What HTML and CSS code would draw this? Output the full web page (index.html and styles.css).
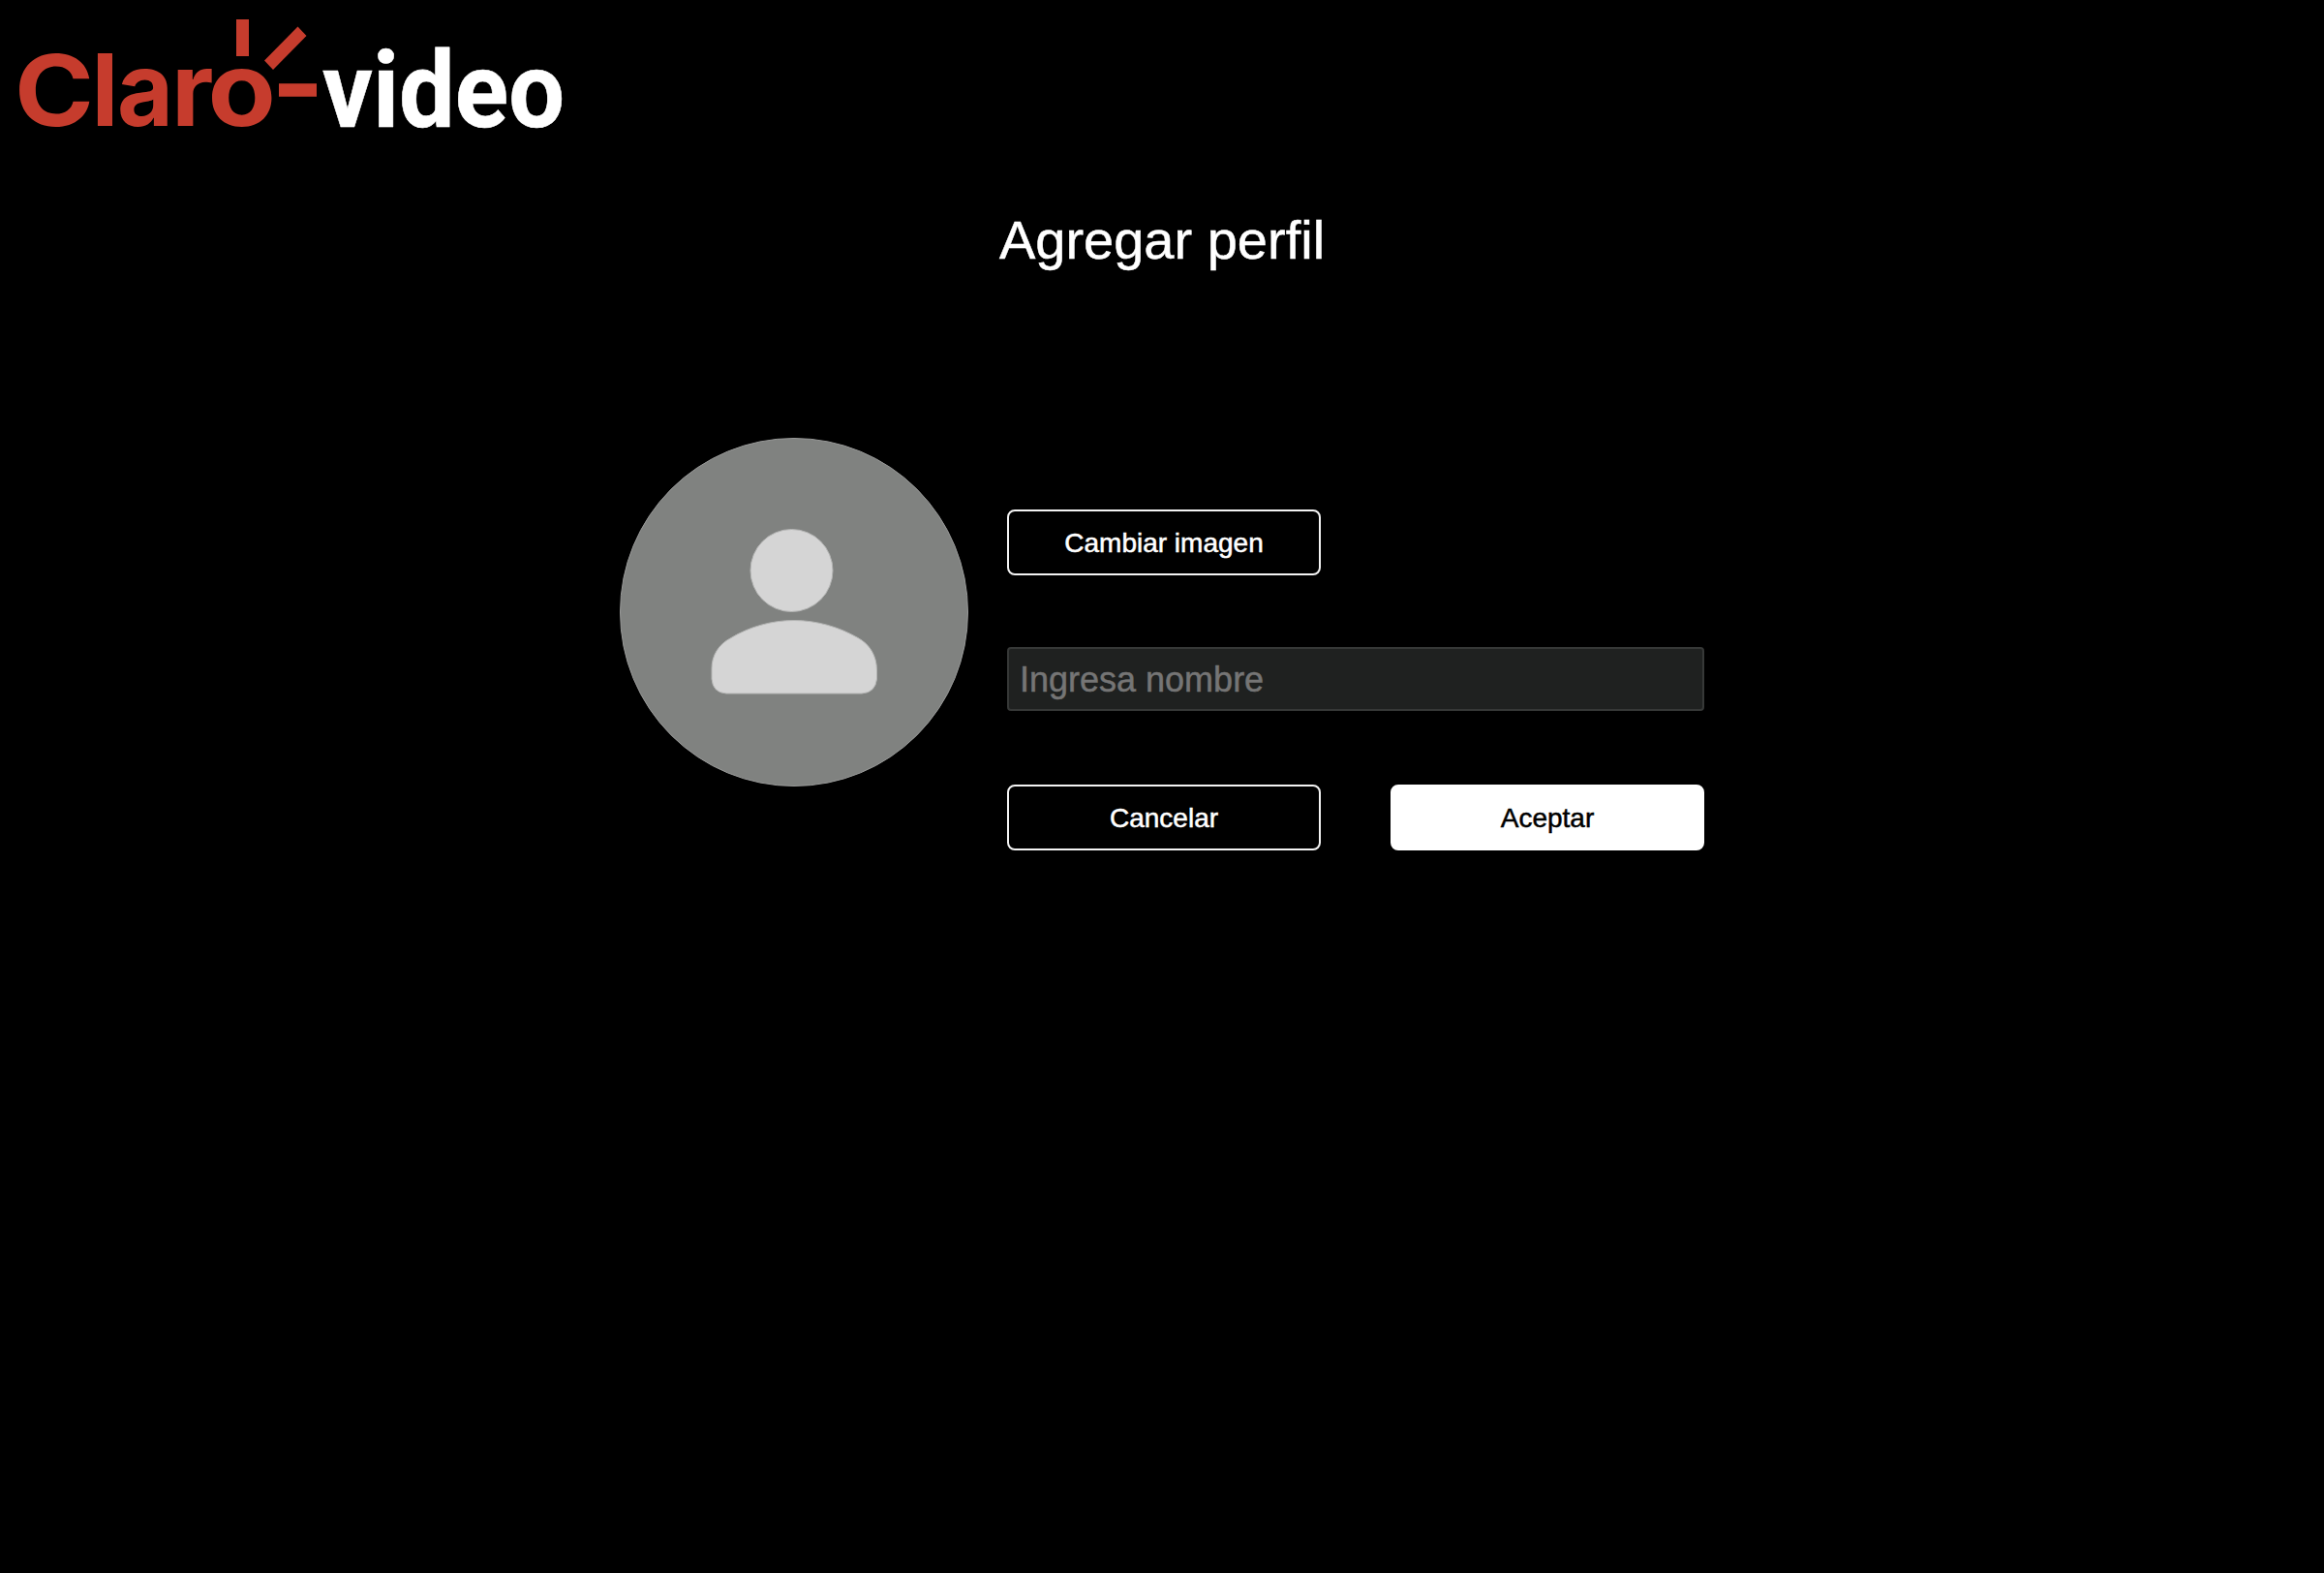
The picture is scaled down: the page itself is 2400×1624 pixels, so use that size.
FILE: index.html
```html
<!DOCTYPE html>
<html lang="es">
<head>
<meta charset="utf-8">
<title>Claro video</title>
<link rel="stylesheet" href="styles.css">
</head>
<body>
<header class="header">
<svg class="logo" width="600" height="170" viewBox="0 0 600 170" role="img" aria-label="Claro video">
<text class="logo-claro" y="130"><tspan class="logo-c" x="15" textLength="82" lengthAdjust="spacingAndGlyphs">C</tspan><tspan class="logo-l" x="94.500">l</tspan><tspan x="121" textLength="58" lengthAdjust="spacingAndGlyphs">a</tspan><tspan x="177">r</tspan><tspan x="214.500" textLength="70.500" lengthAdjust="spacingAndGlyphs">o</tspan></text>
<g class="logo-rays">
<path d="M244 20h13v38h-13z"/>
<path d="M307.500 27.500l9 9.500-34.500 35-9-9.500z"/>
<path d="M288 86.300h39v13.500h-39z"/>
</g>
<text class="logo-video" x="333" y="130.500" textLength="250" lengthAdjust="spacingAndGlyphs">video</text>
</svg>
</header>
<main class="profile">
<h1 class="title">Agregar perfil</h1>
<form class="editor">
<svg class="avatar" width="360" height="360" viewBox="0 0 360 360" aria-hidden="true">
<circle class="avatar-bg" cx="180" cy="180" r="179.500"/>
<g class="avatar-person">
<circle cx="177.500" cy="137" r="42.500"/>
<path d="M95 238C95 225 102 213 115 206.500C134 195 157 188.500 180 188.500S226 195 246 206.500C258 213 265.500 225 265.500 240V249Q264 263 250 264H110Q96 263 95 249Z"/>
</g>
</svg>
<div class="fields">
<button class="button" type="button">Cambiar imagen</button>
<input class="name" type="text" placeholder="Ingresa nombre">
<div class="actions">
<button class="button" type="button">Cancelar</button>
<button class="button button-primary" type="button">Aceptar</button>
</div>
</div>
</form>
</main>
</body>
</html>
```
FILE: styles.css
```css
* { box-sizing: border-box; }
body {
  margin: 0;
  min-height: 1624px;
  background: #000;
  color: #fff;
  font-family: "Liberation Sans", Arial, sans-serif;
  -webkit-text-stroke: 0.5px currentColor;
}
.header { height: 170px; }
.logo { display: block; -webkit-text-stroke: 0; }
.logo-claro { font: 700 107px Inter, sans-serif; fill: #c63c2d; }
.logo-c { font-size: 102px; }
.logo-l { font-size: 103px; }
.logo-rays { fill: #c63c2d; }
.logo-video { font: 700 109px Roboto, sans-serif; fill: #fff; stroke: #fff; stroke-width: 0.6px; }
.profile {
  width: 1120px;
  margin: 0 auto;
  padding-top: 46px;
}
.title {
  margin: 0 0 172px;
  font-size: 56px;
  line-height: 64px;
  font-weight: 400;
  text-align: center;
}
.editor { display: flex; gap: 40px; }
.avatar { flex: none; }
.avatar-bg { fill: #808280; stroke: #999a99; stroke-width: 1; }
.avatar-person { fill: #d5d5d5; stroke: #b4b5b4; stroke-width: 1; }
.fields {
  flex: 1;
  display: flex;
  flex-direction: column;
  align-items: flex-start;
  padding-top: 74px;
}
.button {
  width: 324px;
  height: 68px;
  padding: 2px 0 0;
  border: 2px solid #f3f3f3;
  border-radius: 8px;
  background: #000;
  color: #fff;
  font: 28px "Liberation Sans", Arial, sans-serif;
}
.button-primary { border-color: #fff; background: #fff; color: #000; }
.name {
  width: 100%;
  height: 66px;
  margin: 74px 0 76px;
  padding: 2px 11px 0;
  border: 2px solid #363837;
  border-radius: 4px;
  background: #1f2120;
  color: #fff;
  font: 36px "Liberation Sans", Arial, sans-serif;
}
.name::placeholder { color: #757575; opacity: 1; }
.actions { display: flex; justify-content: space-between; width: 100%; }
```
